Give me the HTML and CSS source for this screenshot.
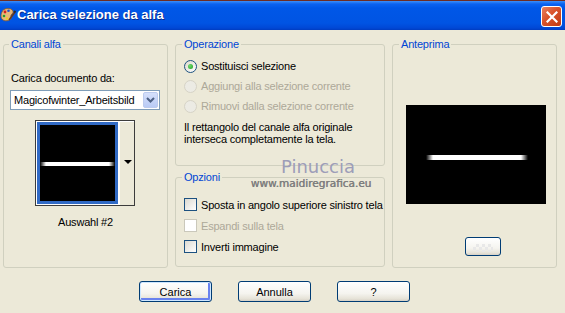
FILE: index.html
```html
<!DOCTYPE html>
<html lang="it">
<head>
    <meta charset="UTF-8">
    <title>Carica selezione da alfa</title>
    <link rel="stylesheet" href="styles.css">
</head>
<body>
<div class="window">
    <div class="titlebar">
        <svg class="app-icon" width="16" height="16" viewBox="0 0 16 16">
            <path d="M2 5 C3 1, 11 0, 13 4 C14 7, 10 7, 11 10 C12 13, 6 15, 3 13 C0 11, 1 7, 2 5 Z" fill="#e8b878" stroke="#8a5a2a" stroke-width="0.8"/>
            <circle cx="5" cy="5" r="1.4" fill="#d42020"/>
            <circle cx="8.5" cy="3.8" r="1.3" fill="#2050d0"/>
            <circle cx="4" cy="9" r="1.3" fill="#20a030"/>
            <circle cx="7" cy="11.5" r="1.2" fill="#f0d020"/>
            <path d="M9 13 L15 5" stroke="#6a3a1a" stroke-width="1.6"/>
            <path d="M14 5.5 L15.5 4" stroke="#2a2a2a" stroke-width="2"/>
        </svg>
        <span class="title">Carica selezione da alfa</span>
        <div class="close-btn">
            <svg width="12" height="12" viewBox="0 0 12 12">
                <path d="M1.5 1.5 L10.5 10.5 M10.5 1.5 L1.5 10.5" stroke="#fff" stroke-width="2.2" stroke-linecap="square"/>
            </svg>
        </div>
    </div>

    <div class="main">
        <fieldset class="group col-channels">
            <legend>Canali alfa</legend>
            <div class="label">Carica documento da:</div>
            <div class="select">
                <span>Magicofwinter_Arbeitsbild</span>
                <div class="select-btn">
                    <svg width="9" height="6" viewBox="0 0 9 6">
                        <path d="M1 1 L4.5 4.5 L8 1" stroke="#4d6185" stroke-width="2" fill="none"/>
                    </svg>
                </div>
            </div>
            <div class="thumb">
                <div class="thumb-img">
                    <div class="line"></div>
                </div>
                <div class="thumb-arrow"></div>
            </div>
            <div class="caption">Auswahl #2</div>
        </fieldset>

        <div class="col-middle">
            <fieldset class="group group-op">
                <legend>Operazione</legend>
                <div class="option">
                    <span class="radio checked"></span>
                    <span>Sostituisci selezione</span>
                </div>
                <div class="option disabled">
                    <span class="radio"></span>
                    <span>Aggiungi alla selezione corrente</span>
                </div>
                <div class="option disabled">
                    <span class="radio"></span>
                    <span>Rimuovi dalla selezione corrente</span>
                </div>
                <div class="note">Il rettangolo del canale alfa originale<br>interseca completamente la tela.</div>
            </fieldset>
            <fieldset class="group group-opts">
                <legend>Opzioni</legend>
                <div class="option check-row">
                    <span class="check"></span>
                    <span>Sposta in angolo superiore sinistro tela</span>
                </div>
                <div class="option check-row disabled">
                    <span class="check"></span>
                    <span>Espandi sulla tela</span>
                </div>
                <div class="option check-row">
                    <span class="check"></span>
                    <span>Inverti immagine</span>
                </div>
            </fieldset>
        </div>

        <fieldset class="group col-preview">
            <legend>Anteprima</legend>
            <div class="preview">
                <div class="line"></div>
            </div>
            <div class="btn small-btn"><span class="checker"></span></div>
        </fieldset>
    </div>

    <div class="footer">
        <div class="btn default">Carica</div>
        <div class="btn">Annulla</div>
        <div class="btn">?</div>
    </div>

    <div class="watermark">
        <div class="wm-name">Pinuccia</div>
        <div class="wm-site">www.maidiregrafica.eu</div>
    </div>
</div>
</body>
</html>
```

FILE: styles.css
```css
body {
    margin: 0;
    padding: 0;
    font-family: "Liberation Sans", Arial, sans-serif;
    font-size: 11px;
    letter-spacing: -0.2px;
    color: #000;
}

.window {
    position: relative;
    width: 565px;
    height: 313px;
    background-color: #ece9d8;
    overflow: hidden;
}

.titlebar {
    height: 29px;
    border-top: 1px solid #6e2c22;
    display: flex;
    align-items: center;
    background: linear-gradient(#3d8ff8 0, #0b62f0 3px, #0057e7 7px, #0054e3 22px, #0048d6 27px, #003cc0 29px);
}

.app-icon {
    margin-left: 0;
    margin-top: -2px;
}

.title {
    margin-left: 1px;
    font-size: 13px;
    font-weight: bold;
    letter-spacing: 0;
    color: #fff;
    text-shadow: 1px 1px 0 #0a2a8a;
    margin-top: -2px;
}

.close-btn {
    margin-left: auto;
    margin-right: 3px;
    margin-top: 2px;
    width: 19px;
    height: 19px;
    border: 1px solid #fff;
    border-radius: 3px;
    background: linear-gradient(135deg, #e98060 0, #d8522a 45%, #c03a12 100%);
    display: flex;
    align-items: center;
    justify-content: center;
}

.main {
    display: flex;
    padding: 8px 0 0 3px;
    gap: 7px;
}

.group {
    margin: 0;
    padding: 0;
    border: 1px solid #d0d0bf;
    border-radius: 3px;
    min-width: 0;
    box-sizing: border-box;
}

.group legend {
    padding: 0 2px;
    line-height: 13px;
    color: #0046d5;
}

.col-channels {
    width: 165px;
    height: 230px;
    padding: 0 6px;
}

.col-channels legend {
    margin-left: -1px;
}

.label {
    margin-top: 21px;
    line-height: 13px;
    padding-left: 1px;
}

.select {
    margin-top: 5px;
    height: 20px;
    box-sizing: border-box;
    border: 1px solid #7f9db9;
    background: #fff;
    display: flex;
    align-items: center;
    padding-left: 3px;
    width: 150px;
}

.select-btn {
    margin-left: auto;
    margin-right: 1px;
    width: 15px;
    height: 16px;
    box-sizing: border-box;
    border: 1px solid #bccbee;
    border-radius: 2px;
    background: linear-gradient(#d5e0fb, #b9cbf5);
    display: flex;
    align-items: center;
    justify-content: center;
}

.thumb {
    margin: 10px 0 0 25px;
    width: 100px;
    height: 86px;
    box-sizing: border-box;
    border: 1px solid #3c3c3c;
    display: flex;
    background: #fff;
}

.thumb-img {
    margin: 1px 0 1px 1px;
    width: 81px;
    box-sizing: border-box;
    border: 3px solid #316ac5;
    background: #000;
    display: flex;
    align-items: center;
}

.thumb-img .line {
    width: 100%;
    height: 4px;
    margin-top: 2px;
    background: linear-gradient(90deg, #000 0, #fff 6px, #fff calc(100% - 6px), #000 100%);
}

.thumb-arrow {
    flex: 1;
    margin: 1px 0 0 1px;
    background: #ece9d8;
    border-left: 1px solid #ffffff;
    position: relative;
}

.thumb-arrow::after {
    content: "";
    position: absolute;
    left: 4px;
    top: 38px;
    border-left: 4px solid transparent;
    border-right: 4px solid transparent;
    border-top: 4px solid #000;
}

.caption {
    margin-top: 10px;
    line-height: 13px;
    text-align: center;
}

.col-middle {
    width: 210px;
    display: flex;
    flex-direction: column;
    gap: 5px;
}

.group-op {
    height: 128px;
    padding: 0 0 0 8px;
}

.group-op legend,
.group-opts legend {
    margin-left: -2px;
}

.group-op .option:first-of-type {
    margin-top: 5px;
}

.option {
    display: flex;
    align-items: center;
    height: 20px;
    gap: 4px;
    white-space: nowrap;
}

.option.disabled {
    color: #aca899;
}

.radio {
    width: 13px;
    height: 13px;
    box-sizing: border-box;
    border: 1px solid #1c5180;
    border-radius: 50%;
    background: linear-gradient(135deg, #dcd9cd, #fff);
    display: flex;
    align-items: center;
    justify-content: center;
}

.radio.checked::after {
    content: "";
    width: 5px;
    height: 5px;
    border-radius: 50%;
    background: radial-gradient(circle at 35% 35%, #6fd86f, #21a121);
}

.option.disabled .radio {
    border-color: #d6d3c6;
    background: #ecebe4;
}

.note {
    margin-top: 5px;
    line-height: 12px;
    white-space: nowrap;
}

.group-opts {
    height: 96px;
    padding: 0 0 0 8px;
}

.check-row {
    height: 21px;
}

.group-opts .check-row:first-of-type {
    margin-top: 10px;
}

.check {
    width: 13px;
    height: 13px;
    box-sizing: border-box;
    border: 1px solid #1c5180;
    background: linear-gradient(135deg, #dcdad1, #fff);
}

.check-row.disabled .check {
    border-color: #cac8bb;
    background: #fff;
}

.col-preview {
    width: 165px;
    height: 230px;
    padding: 0 0 0 13px;
}

.col-preview legend {
    margin-left: -7px;
}

.preview {
    margin-top: 54px;
    width: 140px;
    height: 99px;
    background: #000;
    display: flex;
    align-items: center;
    justify-content: center;
}

.preview .line {
    width: 102px;
    height: 5px;
    margin: 6px 0 0 2px;
    background: linear-gradient(90deg, #000 0, #fff 7px, #fff calc(100% - 7px), #000 100%);
}

.btn {
    width: 73px;
    height: 21px;
    box-sizing: border-box;
    border: 1px solid #003c74;
    border-radius: 3px;
    background: linear-gradient(#ffffff 0, #f5f4ef 60%, #e6e3d8 88%, #d6d0c5 100%);
    display: flex;
    align-items: center;
    justify-content: center;
    letter-spacing: 0;
}

.btn.default {
    box-shadow: inset 0 0 0 1px #cee7ff, inset -1px -1px 0 2px #6982ee;
}

.small-btn {
    margin: 33px 0 0 59px;
    width: 36px;
    height: 19px;
}

.checker {
    width: 20px;
    height: 8px;
    margin-top: 3px;
    background:
        linear-gradient(45deg, #e8e8e8 25%, transparent 25%, transparent 75%, #e8e8e8 75%),
        linear-gradient(45deg, #e8e8e8 25%, transparent 25%, transparent 75%, #e8e8e8 75%);
    background-size: 6px 6px;
    background-position: 0 0, 3px 3px;
}

.footer {
    display: flex;
    gap: 26px;
    padding-left: 139px;
    margin-top: 13px;
}

.watermark {
    position: absolute;
    left: 250px;
    top: 157px;
    width: 122px;
    text-align: center;
    font-family: "DejaVu Sans", Verdana, sans-serif;
    letter-spacing: 0;
    pointer-events: none;
}

.wm-name {
    font-size: 18px;
    line-height: 20px;
    color: #9d9db8;
    padding-left: 14px;
}

.wm-site {
    font-size: 10.5px;
    line-height: 12px;
    color: #7e7e7e;
    text-shadow: 0.4px 0 0 #7e7e7e;
}
```
